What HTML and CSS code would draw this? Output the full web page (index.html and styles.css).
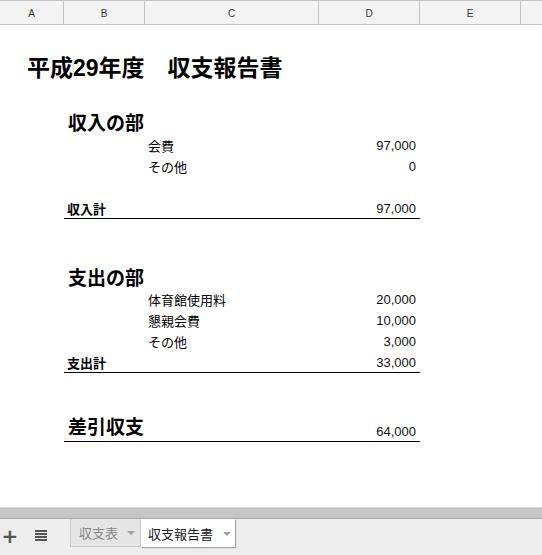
FILE: index.html
```html
<!DOCTYPE html>
<html lang="ja">
<head>
<meta charset="utf-8">
<title>収支報告書</title>
<link rel="stylesheet" href="styles.css">
</head>
<body>
<div class="app">
  <div class="colhead">
    <div class="ch">A</div>
    <div class="ch">B</div>
    <div class="ch">C</div>
    <div class="ch">D</div>
    <div class="ch">E</div>
    <div class="ch last"></div>
  </div>

  <div class="sheet">
    <div class="row h25"></div>
    <div class="row title-row"><div class="c-a title">平成29年度　収支報告書</div></div>
    <div class="row h22"></div>
    <div class="row sec-row"><div class="c-b head">収入の部</div></div>
    <div class="row h4"></div>
    <div class="row item"><div class="c-c label">会費</div><div class="c-d num">97,000</div></div>
    <div class="row item"><div class="c-c label">その他</div><div class="c-d num">0</div></div>
    <div class="row item"></div>
    <div class="row total"><div class="c-bd total-cell"><span class="tlabel">収入計</span><span class="num">97,000</span></div></div>
    <div class="row h44"></div>
    <div class="row sec-row"><div class="c-b head">支出の部</div></div>
    <div class="row h3"></div>
    <div class="row item"><div class="c-c label">体育館使用料</div><div class="c-d num">20,000</div></div>
    <div class="row item"><div class="c-c label">懇親会費</div><div class="c-d num">10,000</div></div>
    <div class="row item"><div class="c-c label">その他</div><div class="c-d num">3,000</div></div>
    <div class="row total"><div class="c-bd total-cell"><span class="tlabel">支出計</span><span class="num">33,000</span></div></div>
    <div class="row h37"></div>
    <div class="row diff"><div class="c-bd diff-cell"><span class="head">差引収支</span><span class="num dnum">64,000</span></div></div>
  </div>

  <div class="bottom">
    <div class="hscroll"></div>
    <div class="tabbar">
      <div class="tb-btn plus">+</div>
      <div class="tb-btn menu">
        <svg width="12" height="11" viewBox="0 0 12 11"><rect x="0" y="0" width="12" height="2" fill="#555"/><rect x="0" y="3" width="12" height="2" fill="#555"/><rect x="0" y="6" width="12" height="2" fill="#555"/><rect x="0" y="9" width="12" height="2" fill="#555"/></svg>
      </div>
      <div class="tab inactive">収支表<span class="caret"></span></div>
      <div class="tab active">収支報告書<span class="caret"></span></div>
    </div>
  </div>
</div>
</body>
</html>
```

FILE: styles.css
```css
html, body {
  margin: 0;
  padding: 0;
  background: #fff;
}
body {
  font-family: "Liberation Sans", "Noto Sans CJK JP", sans-serif;
  color: #000;
}
.app {
  display: flex;
  flex-direction: column;
  height: 555px;
  width: 542px;
  overflow: hidden;
}
.colhead {
  display: grid;
  grid-template-columns: 64px 81px 174px 101px 101px 1fr;
  height: 23px;
  border-top: 1px solid #c4c4c4;
  border-bottom: 1px solid #c4c4c4;
  background: #f3f3f3;
  flex: none;
}
.ch {
  border-right: 1px solid #c4c4c4;
  font-size: 10px;
  color: #333;
  display: flex;
  align-items: center;
  justify-content: center;
  padding-top: 1px;
}
.ch.last { border-right: none; }

.sheet {
  flex: 1;
}
.row {
  display: grid;
  grid-template-columns: 64px 81px 174px 101px 101px 1fr;
  align-items: center;
}
.h25 { height: 23px; }
.h22 { height: 24px; }
.h4 { height: 4px; }
.h3 { height: 3px; }
.h44 { height: 44px; }
.h37 { height: 37px; }
.title-row { height: 36px; }
.sec-row { height: 23px; }
.item { height: 21px; }
.total { height: 21px; }
.diff { height: 32px; }

.c-a { grid-column: 1 / 2; white-space: nowrap; }
.c-b { grid-column: 2 / 3; white-space: nowrap; }
.c-c { grid-column: 3 / 4; white-space: nowrap; }
.c-d { grid-column: 4 / 5; }
.c-bd { grid-column: 2 / 5; }

.title {
  font-size: 23px;
  font-weight: bold;
  padding-left: 27px;
}
.head {
  font-size: 19px;
  font-weight: bold;
  padding-left: 4px;
}
.label {
  font-size: 13px;
  padding-left: 3px;
}
.num {
  font-size: 13px;
  text-align: right;
  padding-right: 4px;
  color: #111;
}
.total-cell {
  height: 20px;
  border-bottom: 1px solid #000;
  display: flex;
  justify-content: space-between;
  align-items: center;
}
.tlabel {
  font-size: 13px;
  font-weight: bold;
  padding-left: 3px;
}
.diff-cell {
  height: 31px;
  border-bottom: 1px solid #000;
  display: flex;
  justify-content: space-between;
  align-items: flex-end;
}
.diff-cell .head { padding-bottom: 2px; }
.dnum { padding-bottom: 2px; }

.bottom {
  flex: none;
}
.hscroll {
  height: 10px;
  border-top: 1px solid #dcdcdc;
  border-bottom: 1px solid #a9a9a9;
  background: #c6c6c6;
  margin-top: 0;
}
.tabbar {
  height: 36px;
  background: #ededed;
  display: flex;
  align-items: flex-start;
}
.tb-btn {
  height: 33px;
  display: flex;
  align-items: center;
  justify-content: center;
}
.plus {
  width: 20px;
  font-size: 20px;
  font-weight: bold;
  color: #555;
  font-family: "DejaVu Sans", sans-serif;
}
.menu {
  width: 42px;
}
.menu svg { margin-left: 0; }
.tab {
  height: 28px;
  font-size: 13px;
  display: flex;
  align-items: center;
  box-sizing: border-box;
  font-family: "Noto Sans CJK JP", sans-serif;
}
.inactive {
  margin-left: 8px;
  width: 71px;
  padding-left: 8px;
  background: #e5e5e5;
  color: #888;
  border: 1px solid #cacaca;
  border-top: none;
}
.active {
  width: 94px;
  padding-left: 7px;
  background: #fff;
  color: #222;
  box-shadow: 1px 1px 1px rgba(0,0,0,0.3);
}
.caret {
  width: 0;
  height: 0;
  border-left: 4px solid transparent;
  border-right: 4px solid transparent;
  border-top: 4px solid #a0a0a0;
  margin-left: 9px;
  margin-top: 1px;
}
.active .caret { margin-left: 10px; }
```
